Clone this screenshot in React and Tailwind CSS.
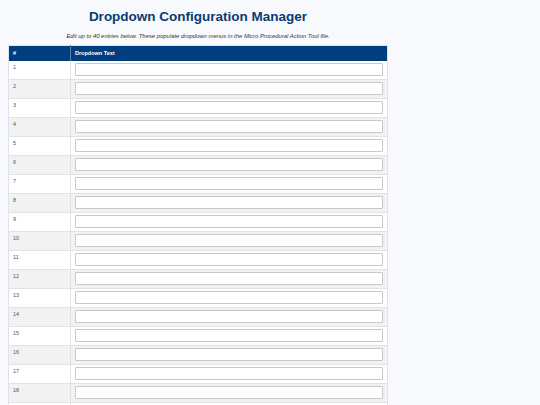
export default function App() {
    const rows = Array.from({ length: 40 }, (_, i) => i + 1);

    return (
        <div className="min-h-screen bg-[#f7f9fc] p-2 font-['Liberation_Sans',Arial,sans-serif]">
            <div className="w-[380px]">
                <h1 className="text-center text-[13.5px] leading-[18px] font-bold text-[#0b3b70]">
                    Dropdown Configuration Manager
                </h1>
                <p className="text-center text-[5.9px] leading-[7px] italic text-[#333] mt-[7px] mb-[5px]">
                    Edit up to 40 entries below. These populate dropdown menus in the Micro Procedural Action Tool file.
                </p>
                <table className="w-full border-collapse bg-white border border-[#dde3ea]">
                    <thead>
                        <tr className="bg-[#003f7f] text-white h-[15px]">
                            <th className="w-[62px] text-left text-[5.5px] font-bold px-[4px] border-r border-[#5c7fa6]">#</th>
                            <th className="text-left text-[5.5px] font-bold px-[4px]">Dropdown Text</th>
                        </tr>
                    </thead>
                    <tbody>
                        {rows.map((n) => (
                            <tr key={n} className={(n % 2 === 0 ? 'bg-[#f2f2f2]' : 'bg-white') + ' h-[19px] border-b border-[#e2e2e2]'}>
                                <td className="align-top text-[5.5px] text-[#555] px-[4px] pt-[2px] border-r border-[#e2e2e2]">{n}</td>
                                <td className="align-top px-[4px] pt-[2px] pb-[3px]">
                                    <input
                                        type="text"
                                        className="block w-full h-[13px] bg-white border border-[#c8c8c8] rounded-[1px] text-[6px] px-1"
                                    />
                                </td>
                            </tr>
                        ))}
                    </tbody>
                </table>
            </div>
        </div>
    );
}
